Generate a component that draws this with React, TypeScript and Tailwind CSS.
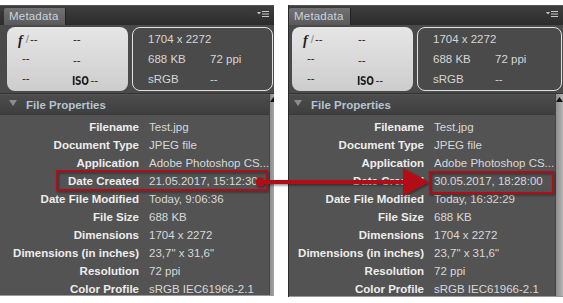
import React from "react";

const rowsL: [string, string][] = [
  ["Filename", "Test.jpg"],
  ["Document Type", "JPEG file"],
  ["Application", "Adobe Photoshop CS..."],
  ["Date Created", "21.05.2017, 15:12:30"],
  ["Date File Modified", "Today, 9:06:36"],
  ["File Size", "688 KB"],
  ["Dimensions", "1704 x 2272"],
  ["Dimensions (in inches)", "23,7\" x 31,6\""],
  ["Resolution", "72 ppi"],
  ["Color Profile", "sRGB IEC61966-2.1"],
];

const rowsR: [string, string][] = rowsL.map(([l, v]) => {
  if (l === "Date Created") return [l, "30.05.2017, 18:28:00"];
  if (l === "Date File Modified") return [l, "Today, 16:32:29"];
  return [l, v];
});

const font = { fontFamily: '"Liberation Sans", Arial, sans-serif' };

function MenuIcon() {
  return (
    <svg width="12" height="8" viewBox="0 0 12 8" className="block">
      <polygon points="0,2 4,2 2,4.5" fill="#c8c8c8" />
      <rect x="5" y="1" width="7" height="1" fill="#c8c8c8" />
      <rect x="5" y="3.5" width="7" height="1" fill="#c8c8c8" />
      <rect x="5" y="6" width="7" height="1" fill="#c8c8c8" />
    </svg>
  );
}

function Panel({ rows, right }: { rows: [string, string][]; right?: boolean }) {
  return (
    <div
      className={
        right
          ? "w-[275px] h-[292px] overflow-hidden border-l border-[#2a2a2a]"
          : "w-[274px] h-[291px] overflow-hidden"
      }
      style={font}
    >
      <div className={right ? "ml-[-4px] w-[278px] h-full flex flex-col" : "w-[274px] h-full flex flex-col"}>
        {/* tab bar */}
        <div className="h-[20px] flex items-end bg-linear-to-b from-[#3e3e3e] to-[#2c2c2c] border-t border-[#555]">
          <div className="ml-[4px] h-[17px] w-[62px] bg-linear-to-b from-[#727272] to-[#5a5a5a] border-r border-[#222] rounded-tl-[2px] pl-[5px] text-[11.5px] leading-[17px] text-[#c9d4e0] tracking-[0.2px]">
            Metadata
          </div>
          <div className="flex-1" />
          <div className="mb-[7px] mr-[5px]">
            <MenuIcon />
          </div>
        </div>
        {/* top section */}
        <div className="h-[68px] bg-[#4a4a4a] flex gap-[4px] pl-[7px] pr-[1px] pt-[2px]">
          <div className="w-[121px] h-[64px] rounded-[8px] bg-linear-to-b from-[#e6e6e6] to-[#cdcdcd] text-[11.5px] text-[#1e1e1e] flex flex-col pt-[3px]">
            <div className="h-[20px] flex items-center">
              <span className="ml-[11px] w-[55px] flex items-center">
                <span className="italic font-bold text-[14px]" style={{ fontFamily: '"Liberation Serif", serif' }}>f</span>
                <span className="text-[#888] ml-[3px]">/</span>
                <span className="ml-[1px]">--</span>
              </span>
              <span>--</span>
            </div>
            <div className="h-[20px] flex items-center">
              <span className="ml-[15px] w-[51px] mt-[-2px]">--</span>
              <span className="mt-[2px]">--</span>
            </div>
            <div className="h-[20px] flex items-center">
              <span className="ml-[15px] w-[50px] mt-[-2px]">--</span>
              <span className="mt-[2px] flex items-center">
                <span className="font-bold text-[12px] tracking-[-0.5px] scale-x-[0.85] origin-left inline-block" style={{ fontFamily: '"DejaVu Sans Condensed", "Liberation Sans Narrow", sans-serif' }}>ISO</span>
                <span className="ml-[-1px]">--</span>
              </span>
            </div>
          </div>
          <div className="flex-1 h-[64px] rounded-[8px] border border-[#e2e2e2] text-[11.5px] text-[#d6d6d6] flex flex-col pt-[2px]">
            <div className="h-[20px] flex items-center pl-[15px]">1704 x 2272</div>
            <div className="h-[20px] flex items-center pl-[15px]">
              <span className="w-[62px]">688 KB</span>
              <span>72 ppi</span>
            </div>
            <div className="h-[20px] flex items-center pl-[15px]">
              <span className="w-[62px]">sRGB</span>
              <span>--</span>
            </div>
          </div>
        </div>
        <div className="h-[1px] bg-[#333]" />
        {/* lower section */}
        <div className="flex-1 flex min-h-0">
          <div className="flex-1 bg-[#535353] flex flex-col">
            <div className="h-[20px] mt-[1px] bg-linear-to-b from-[#4c4c4c] to-[#3f3f3f] border-b border-[#3a3a3a] flex items-center">
              <svg width="8" height="6" viewBox="0 0 8 6" className="ml-[9px] mt-[-3px]">
                <polygon points="0,0 8,0 4,6" fill="#8c8c8c" />
              </svg>
              <span className="ml-[9px] mt-[2px] text-[11.5px] font-bold text-[#b6c3d2]">File Properties</span>
            </div>
            <div className="pt-[4px] flex flex-col">
              {rows.map(([l, v]) => (
                <div key={l} className="h-[18px] flex items-center text-[11.5px]">
                  <span className="w-[139px] text-right font-bold text-[#ededed] whitespace-nowrap">{l}</span>
                  <span className="ml-[10px] text-[#d8d8d8] whitespace-nowrap">{v}</span>
                </div>
              ))}
            </div>
          </div>
          <div className="w-[8px] flex flex-col bg-linear-to-r from-[#8e8e8e] to-[#b4b4b4] border-l border-[#444]">
            <svg width="7" height="6" viewBox="0 0 7 6" className="mt-[3px] ml-[0px]">
              <polygon points="3.5,0 7,5 0,5" fill="#111" />
            </svg>
          </div>
        </div>
        <div className="h-[1px] bg-[#9a9a9a]" />
      </div>
    </div>
  );
}

export default function App() {
  return (
    <div className="relative w-[563px] h-[303px] bg-white overflow-hidden flex pt-[5px]">
      <Panel rows={rowsL} />
      <div className="w-[14px]" />
      <Panel rows={rowsR} right />
      <svg className="absolute left-0 top-0 pointer-events-none" width="563" height="303">
        <defs>
          <filter id="sh" x="-10%" y="-50%" width="130%" height="200%">
            <feDropShadow dx="1" dy="1.5" stdDeviation="1" floodColor="#000" floodOpacity="0.45" />
          </filter>
        </defs>
        <g filter="url(#sh)">
          <rect x="57" y="171" width="210" height="19" fill="none" stroke="#b20f12" strokeWidth="2" />
          <rect x="430" y="172" width="123" height="21" fill="none" stroke="#b20f12" strokeWidth="2" />
          <line x1="260" y1="182" x2="405" y2="182" stroke="#b20f12" strokeWidth="4" />
          <polygon points="403,168 429,182 403,196" fill="#b20f12" />
          <circle cx="260" cy="182" r="4.5" fill="#b20f12" />
        </g>
      </svg>
    </div>
  );
}
